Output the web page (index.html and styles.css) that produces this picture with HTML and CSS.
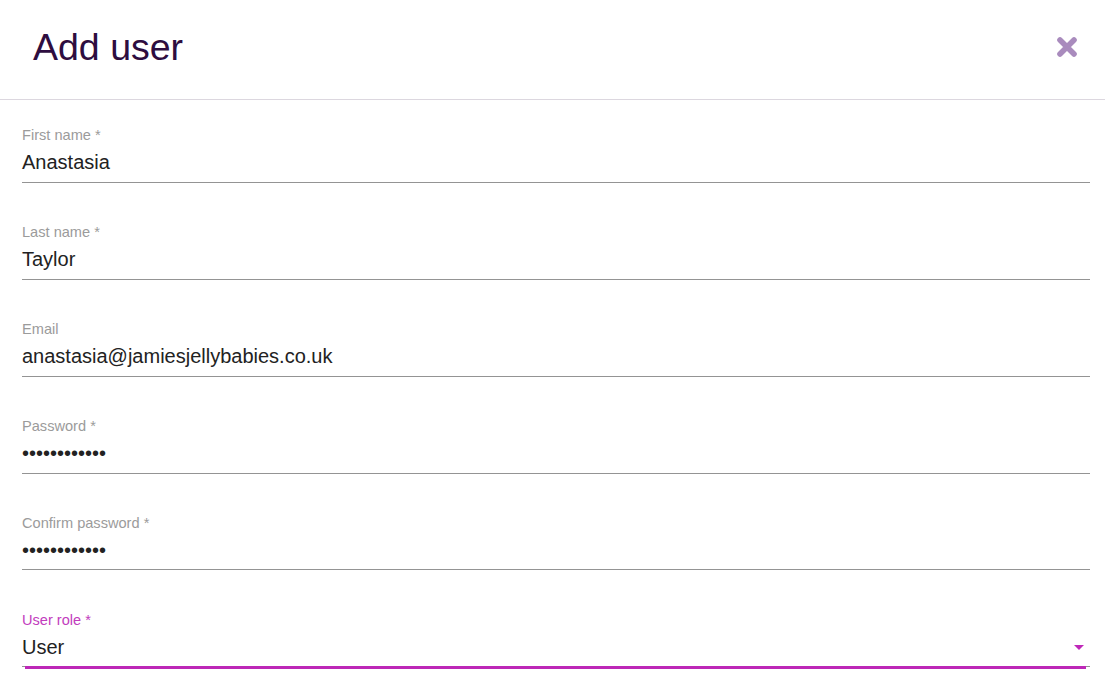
FILE: index.html
```html
<!DOCTYPE html>
<html lang="en">
<head>
<meta charset="utf-8">
<title>Add user</title>
<link rel="stylesheet" href="styles.css">
</head>
<body>
<div class="dialog">
  <header class="dialog-header">
    <h1 class="dialog-title">Add user</h1>
    <button class="close-btn" type="button" aria-label="Close">
      <svg class="close-icon" viewBox="0 0 22 22" width="22" height="22" aria-hidden="true">
        <path d="M4 4L18 18M18 4L4 18" stroke="currentColor" stroke-width="5.6" stroke-linecap="round" fill="none"/>
      </svg>
    </button>
  </header>
  <form class="form">
    <div class="field">
      <label class="field-label">First name *</label>
      <div class="field-value">Anastasia</div>
    </div>
    <div class="field">
      <label class="field-label">Last name *</label>
      <div class="field-value">Taylor</div>
    </div>
    <div class="field">
      <label class="field-label">Email</label>
      <div class="field-value">anastasia@jamiesjellybabies.co.uk</div>
    </div>
    <div class="field">
      <label class="field-label">Password *</label>
      <div class="field-value">&#8226;&#8226;&#8226;&#8226;&#8226;&#8226;&#8226;&#8226;&#8226;&#8226;&#8226;&#8226;</div>
    </div>
    <div class="field">
      <label class="field-label">Confirm password *</label>
      <div class="field-value">&#8226;&#8226;&#8226;&#8226;&#8226;&#8226;&#8226;&#8226;&#8226;&#8226;&#8226;&#8226;</div>
    </div>
    <div class="field field-focused">
      <label class="field-label">User role *</label>
      <div class="field-value select-value">
        <span>User</span>
        <span class="select-arrow"></span>
      </div>
    </div>
  </form>
</div>
</body>
</html>
```
FILE: styles.css
```css
html, body {
  margin: 0;
  padding: 0;
  background: #ffffff;
}

body {
  font-family: "Liberation Sans", Arial, sans-serif;
  width: 1105px;
  height: 678px;
  overflow: hidden;
}

.dialog {
  display: flex;
  flex-direction: column;
}

.dialog-header {
  display: flex;
  align-items: center;
  justify-content: space-between;
  box-sizing: border-box;
  border-bottom: 1px solid #dcd7df;
  height: 100px;
  padding: 0 27px 0 33px;
}

.dialog-title {
  margin: 0;
  margin-top: -6px;
  font-size: 37.5px;
  font-weight: 400;
  line-height: 44px;
  color: #2e0d40;
}

.close-btn {
  border: 0;
  background: none;
  padding: 0;
  margin: -5px 0 0 0;
  width: 22px;
  height: 22px;
  color: #a98bbd;
  display: flex;
  cursor: pointer;
}

.close-icon {
  display: block;
}

.form {
  display: flex;
  flex-direction: column;
  gap: 40.2px;
  padding: 26.3px 15px 0 22px;
}

.field {
  position: relative;
  display: flex;
  flex-direction: column;
  gap: 6.1px;
  padding-bottom: 7.6px;
  border-bottom: 1px solid #949494;
}

.field-label {
  font-size: 14.6px;
  line-height: 18px;
  color: #9b9b9b;
}

.field-value {
  font-size: 20px;
  line-height: 24px;
  color: #222222;
}

.select-value {
  display: flex;
  align-items: center;
  justify-content: space-between;
}

.select-arrow {
  width: 0;
  height: 0;
  border-left: 5.5px solid transparent;
  border-right: 5.5px solid transparent;
  border-top: 5.5px solid #bf28b9;
  margin-right: 6px;
  margin-top: 1px;
}

.field-focused .field-label {
  color: #c23cbd;
}

.field-focused::after {
  content: "";
  position: absolute;
  left: 3px;
  right: 4px;
  bottom: -2.5px;
  height: 2.5px;
  background: #bd28b7;
}
```
